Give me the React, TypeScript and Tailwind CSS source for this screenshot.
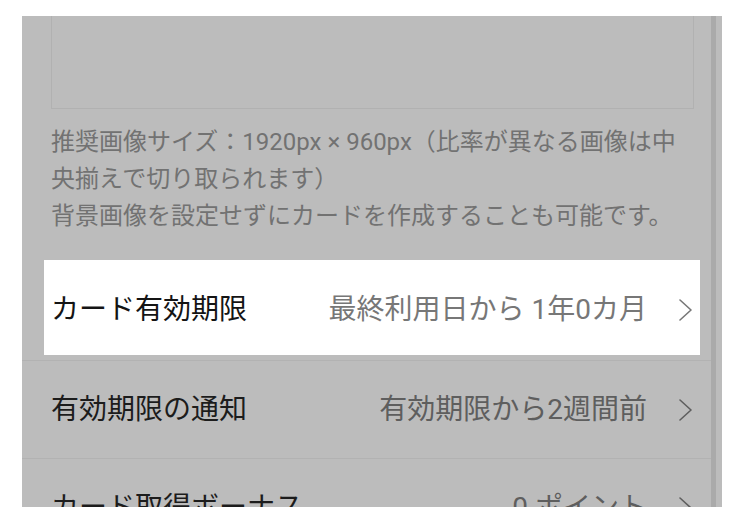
import React from "react";

const font = { fontFamily: '"Roboto", "Noto Sans CJK JP", sans-serif' };

function Chevron({ color }: { color: string }) {
  return (
    <svg width="13" height="22" viewBox="0 0 13 22" className="ml-[32px] shrink-0">
      <path d="M1 1 L12 11 L1 21" fill="none" stroke={color} strokeWidth="1.6" strokeLinecap="round" strokeLinejoin="round" />
    </svg>
  );
}

export default function App() {
  return (
    <div className="w-[744px] h-[524px] bg-white pt-[16px] pl-[22px] overflow-hidden" style={font}>
      <div className="flex w-[700px] h-[491px] bg-[#bcbcbc] overflow-hidden">
        <div className="flex-1 flex flex-col min-w-0">
          <div className="ml-[29px] mr-[17px] h-[93px] shrink-0 border-x border-b border-[#b1b1b1]" />
          <div className="ml-[29px] mt-[15px] text-[24px] leading-[37px] text-[#727272] whitespace-nowrap">
            <div>推奨画像サイズ：1920px × 960px（比率が異なる画像は中</div>
            <div>央揃えで切り取られます）</div>
            <div>背景画像を設定せずにカードを作成することも可能です。</div>
          </div>
          <div className="mt-[25px] ml-[22px] mr-[11px] h-[95px] shrink-0 bg-white flex items-center pl-[7px] pr-[8px] pt-[5px] text-[28px] whitespace-nowrap">
            <span className="flex-1 text-[#141414]">カード有効期限</span>
            <span className="text-[#777777]">最終利用日から 1年0カ月</span>
            <Chevron color="#777777" />
          </div>
          <div className="mt-[5px] h-px shrink-0 bg-[#b2b2b2]" />
          <div className="h-[97px] shrink-0 flex items-center pl-[29px] pr-[19px] text-[28px] whitespace-nowrap">
            <span className="flex-1 text-[#1c1c1c]">有効期限の通知</span>
            <span className="text-[#5e5e5e]">有効期限から2週間前</span>
            <Chevron color="#5e5e5e" />
          </div>
          <div className="h-px shrink-0 bg-[#b2b2b2]" />
          <div className="h-[97px] shrink-0 flex items-center pl-[29px] pr-[19px] text-[28px] whitespace-nowrap">
            <span className="flex-1 text-[#1c1c1c]">カード取得ボーナス</span>
            <span className="text-[#5e5e5e]">0 ポイント</span>
            <Chevron color="#5e5e5e" />
          </div>
        </div>
        <div className="w-[5px] bg-[#aaaaaa] shrink-0" />
        <div className="w-[6px] bg-[#bcbcbc] shrink-0" />
      </div>
    </div>
  );
}
